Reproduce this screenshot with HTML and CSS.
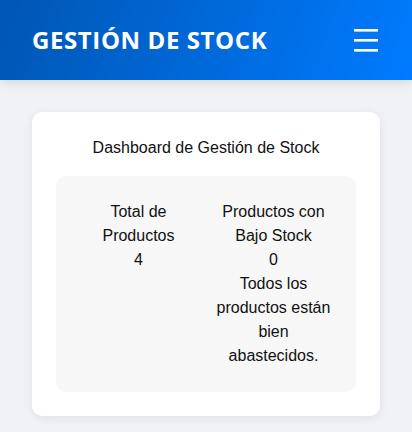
FILE: index.html
```html
<!DOCTYPE html>
<html lang="es">
<head>
<meta charset="utf-8">
<title>Gestión de Stock</title>
<link rel="stylesheet" href="styles.css">
</head>
<body>
<header class="topbar">
  <h1 class="brand">GESTIÓN DE STOCK</h1>
  <button class="menu-btn" aria-label="Menú">
    <svg width="24" height="24" viewBox="0 0 24 24"><rect x="0" y="1" width="24" height="2.6" fill="#fff"/><rect x="0" y="11" width="24" height="2.6" fill="#fff"/><rect x="0" y="21" width="24" height="2.6" fill="#fff"/></svg>
  </button>
</header>
<main class="content">
  <section class="card">
    <h2 class="card-title">Dashboard de Gestión de Stock</h2>
    <div class="stats">
      <div class="stat">
        <div>Total de Productos</div>
        <div>4</div>
      </div>
      <div class="stat">
        <div>Productos con Bajo Stock</div>
        <div>0</div>
        <div>Todos los productos están bien abastecidos.</div>
      </div>
    </div>
  </section>
</main>
</body>
</html>
```
FILE: styles.css
```css
* { box-sizing: border-box; }
html, body { margin: 0; padding: 0; }
body {
  background: #f0f2f5;
  font-family: "Liberation Sans", Arial, sans-serif;
  color: #111;
  font-size: 16px;
  line-height: 24px;
}
.topbar {
  height: 80px;
  display: flex;
  align-items: center;
  justify-content: space-between;
  padding: 0 34px 0 32px;
  background: linear-gradient(110deg, #0056b3 0%, #007bff 100%);
  box-shadow: 0 2px 10px rgba(0,0,0,0.12);
}
.brand {
  margin: 0;
  color: #fff;
  font-family: "Open Sans", sans-serif;
  font-weight: 700;
  font-size: 24px;
  letter-spacing: 0.6px;
  line-height: 1;
}
.menu-btn {
  background: none;
  border: 0;
  padding: 0;
  width: 24px;
  height: 24px;
  display: flex;
  cursor: pointer;
}
.content { padding: 32px; }
.card {
  background: #fff;
  border-radius: 10px;
  box-shadow: 0 2px 10px rgba(0,0,0,0.08);
  padding: 25px 24px 24px;
}
.card-title {
  margin: 0 0 17px;
  font-size: 16px;
  font-weight: 400;
  line-height: 22px;
  text-align: center;
}
.stats {
  background: #f7f7f7;
  border-radius: 10px;
  padding: 16px 15px;
  display: flex;
}
.stat {
  flex: 1;
  padding: 8px;
  text-align: center;
}
```
